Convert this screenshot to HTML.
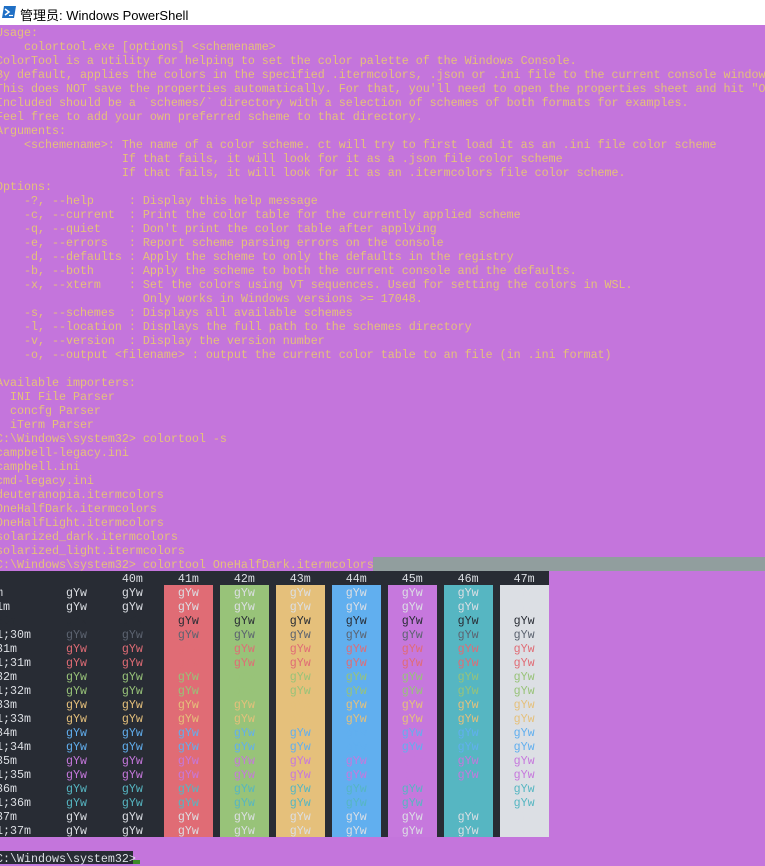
<!DOCTYPE html>
<html><head><meta charset="utf-8"><style>
html,body{margin:0;padding:0;}
body{width:765px;height:864px;overflow:hidden;background:#c475dc;position:relative;}
#title{position:absolute;left:0;top:0;width:765px;height:25px;background:#fff;}
#title span{position:absolute;left:20px;top:5px;font:13px "Liberation Sans","Noto Sans CJK SC",sans-serif;color:#000;}
.abs{position:absolute;}
pre{margin:0;position:absolute;left:-4px;top:25px;font-family:"Liberation Mono",monospace;font-size:11.667px;line-height:14px;color:#e5c07b;white-space:pre;}
pre div{height:14px;position:relative;top:1px;}
</style></head><body>
<div id="title">
<svg class="abs" style="left:2px;top:6px" width="14" height="12" viewBox="0 0 14 12"><polygon points="2,0 14,0 12,12 0,12" fill="#1f6fc5"/><polyline points="3,3 7,6 3,9" fill="none" stroke="#fff" stroke-width="1.5"/><line x1="7" y1="9.5" x2="11" y2="9.5" stroke="#fff" stroke-width="1.2"/></svg>
<span>管理员: Windows PowerShell</span>
</div>
<div class="abs" style="left:373px;top:557px;width:392px;height:14px;background:#919e9e"></div>
<div class="abs" style="left:0;top:571px;width:549px;height:266px;background:#282c34"></div>
<div class="abs" style="left:164px;top:585px;width:49px;height:252px;background:#e06c75"></div>
<div class="abs" style="left:220px;top:585px;width:49px;height:252px;background:#98c379"></div>
<div class="abs" style="left:276px;top:585px;width:49px;height:252px;background:#e5c07b"></div>
<div class="abs" style="left:332px;top:585px;width:49px;height:252px;background:#61afef"></div>
<div class="abs" style="left:388px;top:585px;width:49px;height:252px;background:#c678dd"></div>
<div class="abs" style="left:444px;top:585px;width:49px;height:252px;background:#56b6c2"></div>
<div class="abs" style="left:500px;top:585px;width:49px;height:252px;background:#dcdfe4"></div>
<div class="abs" style="left:0;top:851px;width:133px;height:13px;background:#282c34"></div>
<div class="abs" style="left:133px;top:860px;width:7px;height:4px;background:#3c8c28"></div>
<pre><div>Usage:</div><div>    colortool.exe [options] &lt;schemename&gt;</div><div>ColorTool is a utility for helping to set the color palette of the Windows Console.</div><div>By default, applies the colors in the specified .itermcolors, .json or .ini file to the current console window.</div><div>This does NOT save the properties automatically. For that, you'll need to open the properties sheet and hit "Ok".</div><div>Included should be a `schemes/` directory with a selection of schemes of both formats for examples.</div><div>Feel free to add your own preferred scheme to that directory.</div><div>Arguments:</div><div>    &lt;schemename&gt;: The name of a color scheme. ct will try to first load it as an .ini file color scheme</div><div>                  If that fails, it will look for it as a .json file color scheme</div><div>                  If that fails, it will look for it as an .itermcolors file color scheme.</div><div>Options:</div><div>    -?, --help     : Display this help message</div><div>    -c, --current  : Print the color table for the currently applied scheme</div><div>    -q, --quiet    : Don't print the color table after applying</div><div>    -e, --errors   : Report scheme parsing errors on the console</div><div>    -d, --defaults : Apply the scheme to only the defaults in the registry</div><div>    -b, --both     : Apply the scheme to both the current console and the defaults.</div><div>    -x, --xterm    : Set the colors using VT sequences. Used for setting the colors in WSL.</div><div>                     Only works in Windows versions &gt;= 17048.</div><div>    -s, --schemes  : Displays all available schemes</div><div>    -l, --location : Displays the full path to the schemes directory</div><div>    -v, --version  : Display the version number</div><div>    -o, --output &lt;filename&gt; : output the current color table to an file (in .ini format)</div><div> </div><div>Available importers:</div><div>  INI File Parser</div><div>  concfg Parser</div><div>  iTerm Parser</div><div>C:\Windows\system32&gt; colortool -s</div><div>campbell-legacy.ini</div><div>campbell.ini</div><div>cmd-legacy.ini</div><div>deuteranopia.itermcolors</div><div>OneHalfDark.itermcolors</div><div>OneHalfLight.itermcolors</div><div>solarized_dark.itermcolors</div><div>solarized_light.itermcolors</div><div>C:\Windows\system32&gt; colortool OneHalfDark.itermcolors</div><div style="color:#dcdfe4">                  40m     41m     42m     43m     44m     45m     46m     47m</div><div style="color:#dcdfe4">m         gYw     gYw     gYw     gYw     gYw     gYw     gYw     gYw     gYw</div><div style="color:#dcdfe4">1m        gYw     gYw     gYw     gYw     gYw     gYw     gYw     gYw     gYw</div><div style="color:#282c34">30m       gYw     gYw     gYw     gYw     gYw     gYw     gYw     gYw     gYw</div><div><span style="color:#dcdfe4">1;30m</span><span style="color:#5c6370">     gYw     gYw     gYw     gYw     gYw     gYw     gYw     gYw     gYw</span></div><div><span style="color:#dcdfe4">31m</span><span style="color:#e06c75">       gYw     gYw     gYw     gYw     gYw     gYw     gYw     gYw     gYw</span></div><div><span style="color:#dcdfe4">1;31m</span><span style="color:#e06c75">     gYw     gYw     gYw     gYw     gYw     gYw     gYw     gYw     gYw</span></div><div><span style="color:#dcdfe4">32m</span><span style="color:#98c379">       gYw     gYw     gYw     gYw     gYw     gYw     gYw     gYw     gYw</span></div><div><span style="color:#dcdfe4">1;32m</span><span style="color:#98c379">     gYw     gYw     gYw     gYw     gYw     gYw     gYw     gYw     gYw</span></div><div><span style="color:#dcdfe4">33m</span><span style="color:#e5c07b">       gYw     gYw     gYw     gYw     gYw     gYw     gYw     gYw     gYw</span></div><div><span style="color:#dcdfe4">1;33m</span><span style="color:#e5c07b">     gYw     gYw     gYw     gYw     gYw     gYw     gYw     gYw     gYw</span></div><div><span style="color:#dcdfe4">34m</span><span style="color:#61afef">       gYw     gYw     gYw     gYw     gYw     gYw     gYw     gYw     gYw</span></div><div><span style="color:#dcdfe4">1;34m</span><span style="color:#61afef">     gYw     gYw     gYw     gYw     gYw     gYw     gYw     gYw     gYw</span></div><div><span style="color:#dcdfe4">35m</span><span style="color:#c678dd">       gYw     gYw     gYw     gYw     gYw     gYw     gYw     gYw     gYw</span></div><div><span style="color:#dcdfe4">1;35m</span><span style="color:#c678dd">     gYw     gYw     gYw     gYw     gYw     gYw     gYw     gYw     gYw</span></div><div><span style="color:#dcdfe4">36m</span><span style="color:#56b6c2">       gYw     gYw     gYw     gYw     gYw     gYw     gYw     gYw     gYw</span></div><div><span style="color:#dcdfe4">1;36m</span><span style="color:#56b6c2">     gYw     gYw     gYw     gYw     gYw     gYw     gYw     gYw     gYw</span></div><div style="color:#dcdfe4">37m       gYw     gYw     gYw     gYw     gYw     gYw     gYw     gYw     gYw</div><div style="color:#dcdfe4">1;37m     gYw     gYw     gYw     gYw     gYw     gYw     gYw     gYw     gYw</div><div> </div><div style="color:#dcdfe4">C:\Windows\system32&gt;</div></pre>
</body></html>
